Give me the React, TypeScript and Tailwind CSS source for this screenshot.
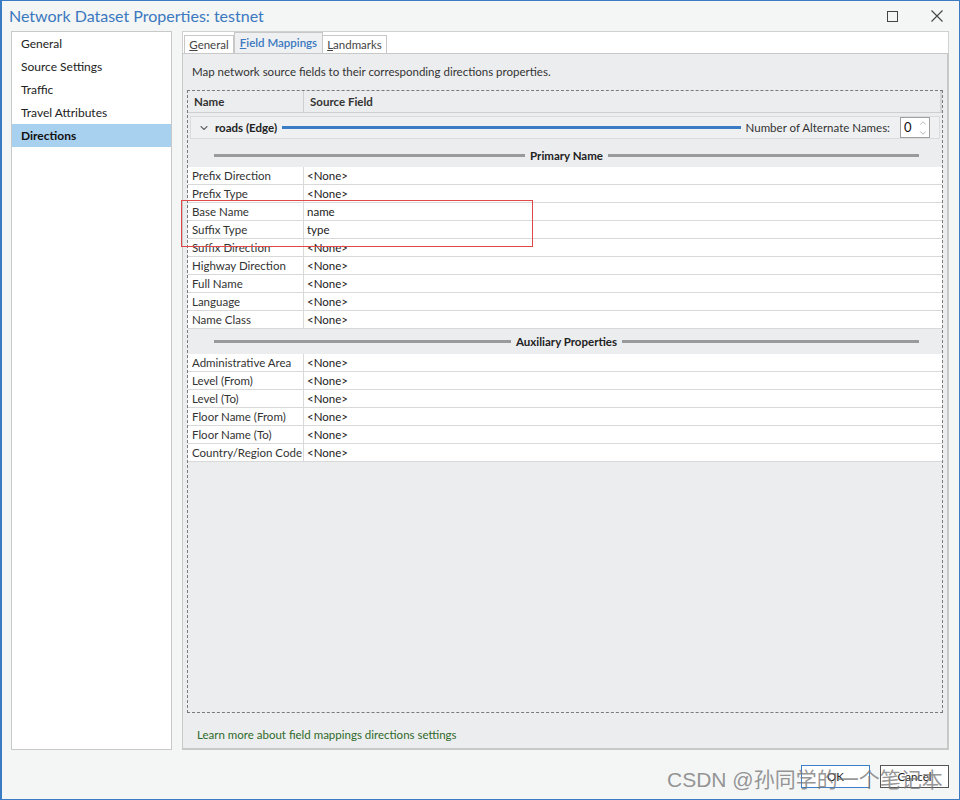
import { ChevronDown, ChevronUp } from 'lucide-react';

const primaryRows = [
  ['Prefix Direction', '<None>'],
  ['Prefix Type', '<None>'],
  ['Base Name', 'name'],
  ['Suffix Type', 'type'],
  ['Suffix Direction', '<None>'],
  ['Highway Direction', '<None>'],
  ['Full Name', '<None>'],
  ['Language', '<None>'],
  ['Name Class', '<None>'],
];

const auxRows = [
  ['Administrative Area', '<None>'],
  ['Level (From)', '<None>'],
  ['Level (To)', '<None>'],
  ['Floor Name (From)', '<None>'],
  ['Floor Name (To)', '<None>'],
  ['Country/Region Code', '<None>'],
];

const navItems = ['General', 'Source Settings', 'Traffic', 'Travel Attributes', 'Directions'];

const Separator = ({ label, className }: { label: string; className: string }) => (
  <div className={`flex items-center pl-[26px] pr-[23px] ${className}`}>
    <div className="flex-1 h-[3px] bg-[#9a9a9a]" />
    <span className="mx-[5px] font-bold text-[#222]">{label}</span>
    <div className="flex-1 h-[3px] bg-[#9a9a9a]" />
  </div>
);

const Row = ({ name, value }: { name: string; value: string }) => (
  <div className="flex h-[18px] bg-white border-b border-[#d9d9d9] leading-[17px]">
    <div className="w-[116px] shrink-0 pl-[4px] border-r border-[#d9d9d9] text-[#333] whitespace-nowrap overflow-hidden">{name}</div>
    <div className="pl-[3px] text-[#222]">{value}</div>
  </div>
);

const App = () => {
  return (
    <div
      className="relative w-[960px] h-[800px] overflow-hidden bg-[#f4f5f5] border border-[#3b7bc4] border-l-2 flex flex-col text-[11.5px] text-[#222]"
      style={{ fontFamily: 'Lato, "Noto Sans", sans-serif' }}
    >
      {/* Title bar */}
      <div className="h-[30px] shrink-0 flex items-center pl-[7px] pr-[16px]">
        <span className="text-[16px] text-[#3a78bf] leading-none">Network Dataset Properties: testnet</span>
        <div className="ml-auto flex items-center gap-[33px]">
          <div className="w-[11px] h-[11px] border border-[#444]" />
          <svg width="12" height="12" viewBox="0 0 12 12" className="stroke-[#444]">
            <path d="M0.5 0.5 L11.5 11.5 M11.5 0.5 L0.5 11.5" strokeWidth="1.1" fill="none" />
          </svg>
        </div>
      </div>

      {/* Body */}
      <div className="h-[719px] shrink-0 flex pl-[9px]">
        <div className="w-[161px] bg-white border border-[#c9c9c9] text-[12px]">
          {navItems.map((item) => (
            <div
              key={item}
              className={`h-[23px] flex items-center pl-[9px] ${item === 'Directions' ? 'bg-[#a8d0ef] font-bold text-[#111]' : 'text-[#222]'}`}
            >
              {item}
            </div>
          ))}
        </div>

        <div className="ml-[10px] w-[767px] flex flex-col">
          {/* Tab strip */}
          <div className="h-[22px] shrink-0 bg-white border border-b-0 border-[#d0d0d0] flex items-end pl-[1px]">
            <div className="h-[18px] w-[50px] border border-b-0 border-[#c8c8c8] bg-white flex items-center justify-center text-[#444]">
              <span><span className="underline">G</span>eneral</span>
            </div>
            <div className="h-[21px] w-[89px] border border-b-0 border-[#c8c8c8] bg-[#eef0f2] flex items-center justify-center text-[#3a78bf] font-semibold">
              <span><span className="underline">F</span>ield Mappings</span>
            </div>
            <div className="h-[18px] w-[64px] border border-b-0 border-l-0 border-[#c8c8c8] bg-white flex items-center justify-center text-[#444]">
              <span><span className="underline">L</span>andmarks</span>
            </div>
          </div>

          {/* Panel */}
          <div className="flex-1 bg-[#ecedef] border border-[#c8c8c8] border-r-2 border-b-2 flex flex-col">
            <div className="pt-[10px] pl-[9px] leading-[16px] text-[#333]">
              Map network source fields to their corresponding directions properties.
            </div>

            <div className="mt-[10px] mx-[4px] h-[623px] border border-dashed border-[#7a7a7a] flex flex-col">
              <div className="h-[22px] flex items-center border-b border-[#cfcfcf] font-bold text-[#333]">
                <div className="w-[116px] pl-[6px] border-r border-[#cfcfcf] h-full flex items-center">Name</div>
                <div className="pl-[6px]">Source Field</div>
                <div className="ml-auto w-[2px] h-full bg-[#d5d5d5]" />
              </div>

              <div className="mt-[3px] mx-[2px] h-[23px] border border-[#dcdcdc] bg-[#eef0f2] flex items-center pl-[7px] pr-[9px]">
                <ChevronDown size={12} strokeWidth={2.2} className="text-[#666]" />
                <span className="ml-[5px] font-bold text-[#222]">roads (Edge)</span>
                <div className="flex-1 h-[3px] bg-[#3a7cc5] mx-[5px]" />
                <span className="text-[#333]">Number of Alternate Names:</span>
                <div className="ml-[10px] w-[30px] h-[21px] bg-white border border-[#a0a0a0] flex items-center pl-[3px]">
                  <span className="text-[13px] text-[#111]">0</span>
                  <div className="ml-auto mr-[1px] flex flex-col text-[#888]">
                    <ChevronUp size={10} strokeWidth={1.5} />
                    <ChevronDown size={10} strokeWidth={1.5} />
                  </div>
                </div>
              </div>

              <Separator label="Primary Name" className="h-[28px] pt-[5px]" />
              {primaryRows.map(([n, v]) => (
                <Row key={n} name={n} value={v} />
              ))}
              <Separator label="Auxiliary Properties" className="h-[25px]" />
              {auxRows.map(([n, v]) => (
                <Row key={n} name={n} value={v} />
              ))}
            </div>

            <div className="mt-[13px] pl-[14px] text-[#2f6a2a]">
              Learn more about field mappings directions settings
            </div>
          </div>
        </div>
      </div>

      {/* Footer buttons */}
      <div className="flex-1 flex justify-end items-start pt-[15px] pr-[10px] gap-[10px]">
        <button className="w-[69px] h-[23px] bg-white border border-[#3c7fc8] text-[#222]">OK</button>
        <button className="w-[69px] h-[23px] bg-white border border-[#555] text-[#222]">Cancel</button>
      </div>

      {/* Annotation box */}
      <div className="absolute left-[179px] top-[199px] w-[352px] h-[47px] border border-[#e04848]" />

      {/* Watermark */}
      <div
        className="absolute left-[665px] top-[766px] text-[21px] leading-[26px] text-[#7a7a7a]/80 whitespace-nowrap"
        style={{ fontFamily: '"Liberation Sans", "Noto Sans CJK SC", sans-serif' }}
      >
        CSDN @孙同学的一个笔记本
      </div>
    </div>
  );
};

export default App;
